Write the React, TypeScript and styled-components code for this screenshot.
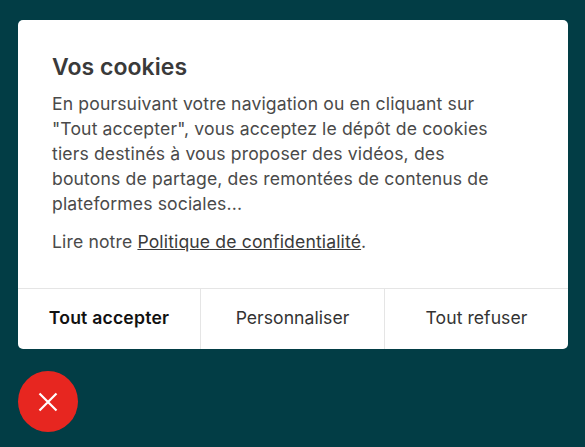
import React from 'react';
import styled, { createGlobalStyle } from 'styled-components';

const GlobalStyle = createGlobalStyle`
  html, body {
    margin: 0;
    height: 100%;
    background: #023d45;
    font-family: Inter, "Liberation Sans", sans-serif;
  }
`;

const Page = styled.div`
  width: 585px;
  height: 447px;
  padding: 20px 17px 0 18px;
  box-sizing: border-box;
  overflow: hidden;
`;

const Dialog = styled.section`
  background: #fff;
  border-radius: 5px;
  height: 329px;
  display: flex;
  flex-direction: column;
  overflow: hidden;
`;

const Body = styled.div`
  flex: 1;
  padding: 33px 34px 0;
`;

const Title = styled.h1`
  margin: 0 0 10px;
  font-size: 23px;
  line-height: 28px;
  font-weight: 600;
  letter-spacing: 0.05px;
  color: #3a3a3a;
`;

const Text = styled.p`
  margin: 0 0 13px;
  font-size: 17.6px;
  line-height: 25px;
  letter-spacing: 0.13px;
  color: #4a4a4a;
`;

const Link = styled.a`
  color: #3a3a3a;
  text-decoration: underline;
`;

const Actions = styled.div`
  display: grid;
  grid-template-columns: 182px 184px 1fr;
  height: 60px;
  border-top: 1px solid #e5e5e5;
`;

const Action = styled.button<{ $primary?: boolean }>`
  background: none;
  border: 0;
  padding: 0 0 3px;
  font: inherit;
  font-size: 17.6px;
  font-weight: ${(p) => (p.$primary ? 600 : 400)};
  letter-spacing: ${(p) => (p.$primary ? '0.2px' : '0.04px')};
  color: ${(p) => (p.$primary ? '#111' : '#333')};
  & + & {
    border-left: 1px solid #e5e5e5;
  }
`;

const Close = styled.button`
  margin-top: 22px;
  width: 60px;
  height: 61px;
  border: 0;
  padding: 0;
  border-radius: 50%;
  background: #e72620;
  display: flex;
  align-items: center;
  justify-content: center;
`;

const App = (): React.ReactElement => {
  return (
    <Page>
      <GlobalStyle />
      <Dialog>
        <Body>
          <Title>Vos cookies</Title>
          <Text>
            En poursuivant votre navigation ou en cliquant sur
            <br />
            "Tout accepter", vous acceptez le dépôt de cookies
            <br />
            tiers destinés à vous proposer des vidéos, des
            <br />
            boutons de partage, des remontées de contenus de
            <br />
            plateformes sociales...
          </Text>
          <Text>
            Lire notre <Link>Politique de confidentialité</Link>.
          </Text>
        </Body>
        <Actions>
          <Action $primary>Tout accepter</Action>
          <Action>Personnaliser</Action>
          <Action>Tout refuser</Action>
        </Actions>
      </Dialog>
      <Close aria-label="Fermer">
        <svg width="20" height="20" viewBox="0 0 20 20" fill="none" stroke="#fff" strokeWidth="2.2">
          <path d="M1.5 1.5l17 17M18.5 1.5l-17 17" />
        </svg>
      </Close>
    </Page>
  );
};

export default App;
